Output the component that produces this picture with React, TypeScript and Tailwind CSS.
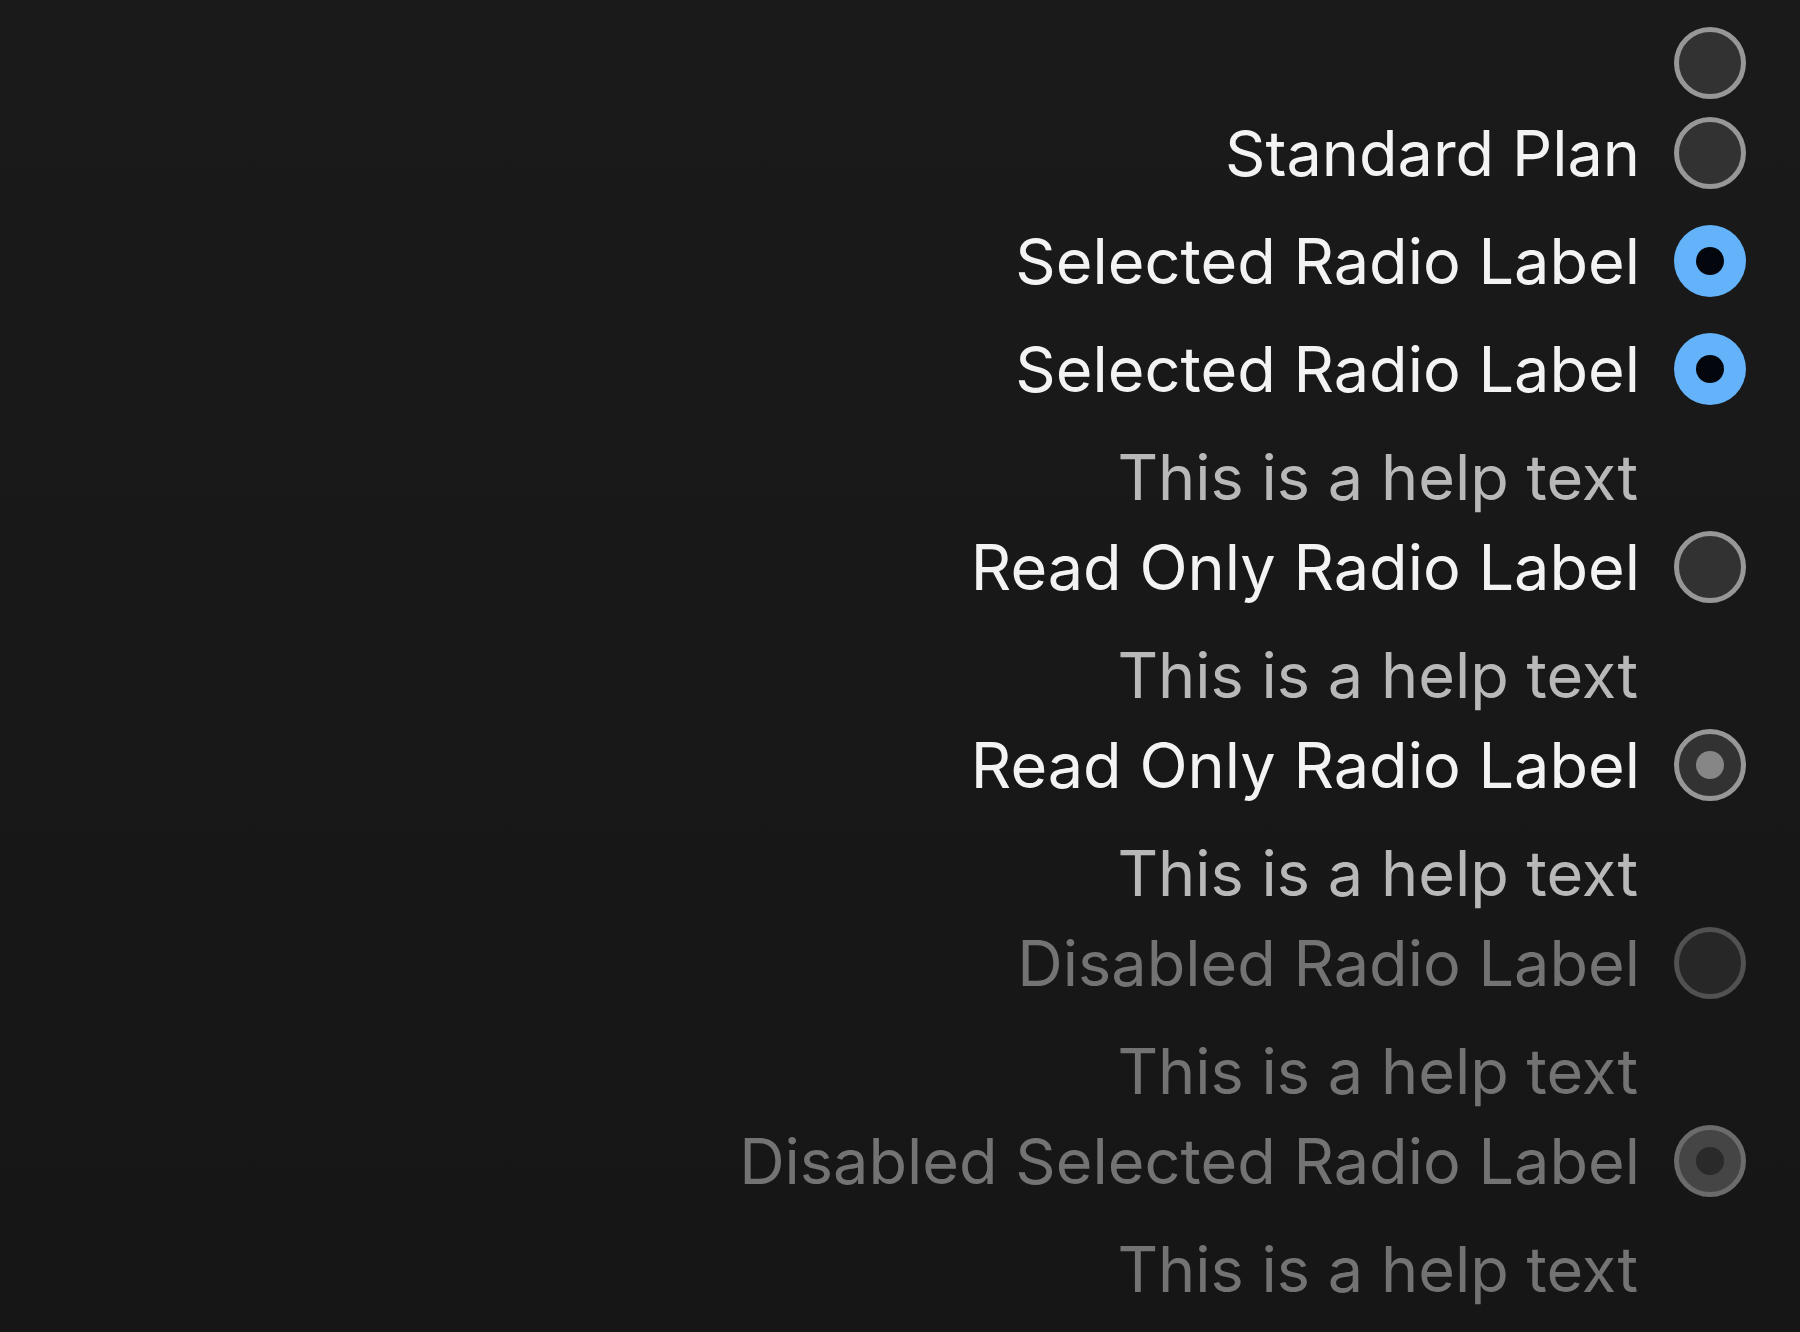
import React from "react";

type Tone = "normal" | "selected" | "readonlySelected" | "disabled" | "disabledSelected";

const circle: Record<Tone, string> = {
  normal: "border-5 border-[#979797] bg-[#323232]",
  selected: "bg-[#64b2f9] after:bg-[#03070d]",
  readonlySelected: "border-5 border-[#979797] bg-[#323232] after:bg-[#868686]",
  disabled: "border-5 border-[#515151] bg-[#272727]",
  disabledSelected: "border-5 border-[#6b6b6b] bg-[#454545] after:bg-[#2a2a2a]",
};

const rows: { label?: string; help?: boolean; tone: Tone; gap: string }[] = [
  { tone: "normal", gap: "" },
  { label: "Standard Plan", tone: "normal", gap: "" },
  { label: "Selected Radio Label", tone: "selected", gap: "mt-[18px]" },
  { label: "Selected Radio Label", tone: "selected", gap: "mt-[18px]", help: true },
  { label: "Read Only Radio Label", tone: "normal", gap: "", help: true },
  { label: "Read Only Radio Label", tone: "readonlySelected", gap: "", help: true },
  { label: "Disabled Radio Label", tone: "disabled", gap: "", help: true },
  { label: "Disabled Selected Radio Label", tone: "disabledSelected", gap: "", help: true },
];

export default function App() {
  return (
    <main className="min-h-screen bg-linear-to-b from-[#1a1a1a] to-[#161616] pt-[18px] pr-[54px] font-['Inter',sans-serif] text-[63px] leading-[90px] font-normal">
      {rows.map((r, i) => {
        const disabled = r.tone.startsWith("disabled");
        const checked = r.tone.toLowerCase().endsWith("selected");
        return (
          <div key={i} className={r.gap}>
            <div className="flex h-[90px] items-center justify-end gap-[34px]">
              {r.label && (
                <label htmlFor={`radio-${i}`} className={disabled ? "text-[#737373]" : "text-[#f3f3f3]"}>
                  {r.label}
                </label>
              )}
              <input
                id={`radio-${i}`}
                type="radio"
                name={`group-${i}`}
                defaultChecked={checked}
                disabled={disabled}
                aria-label={r.label ? undefined : "Radio"}
                aria-describedby={r.help ? `help-${i}` : undefined}
                className={`grid size-[72px] shrink-0 appearance-none place-items-center rounded-full after:size-7 after:rounded-full after:content-[''] ${circle[r.tone]}`}
              />
            </div>
            {r.help && (
              <p id={`help-${i}`} className={`mt-[18px] mr-[108px] text-right ${disabled ? "text-[#737373]" : "text-[#b8b8b8]"}`}>
                This is a help text
              </p>
            )}
          </div>
        );
      })}
    </main>
  );
}
